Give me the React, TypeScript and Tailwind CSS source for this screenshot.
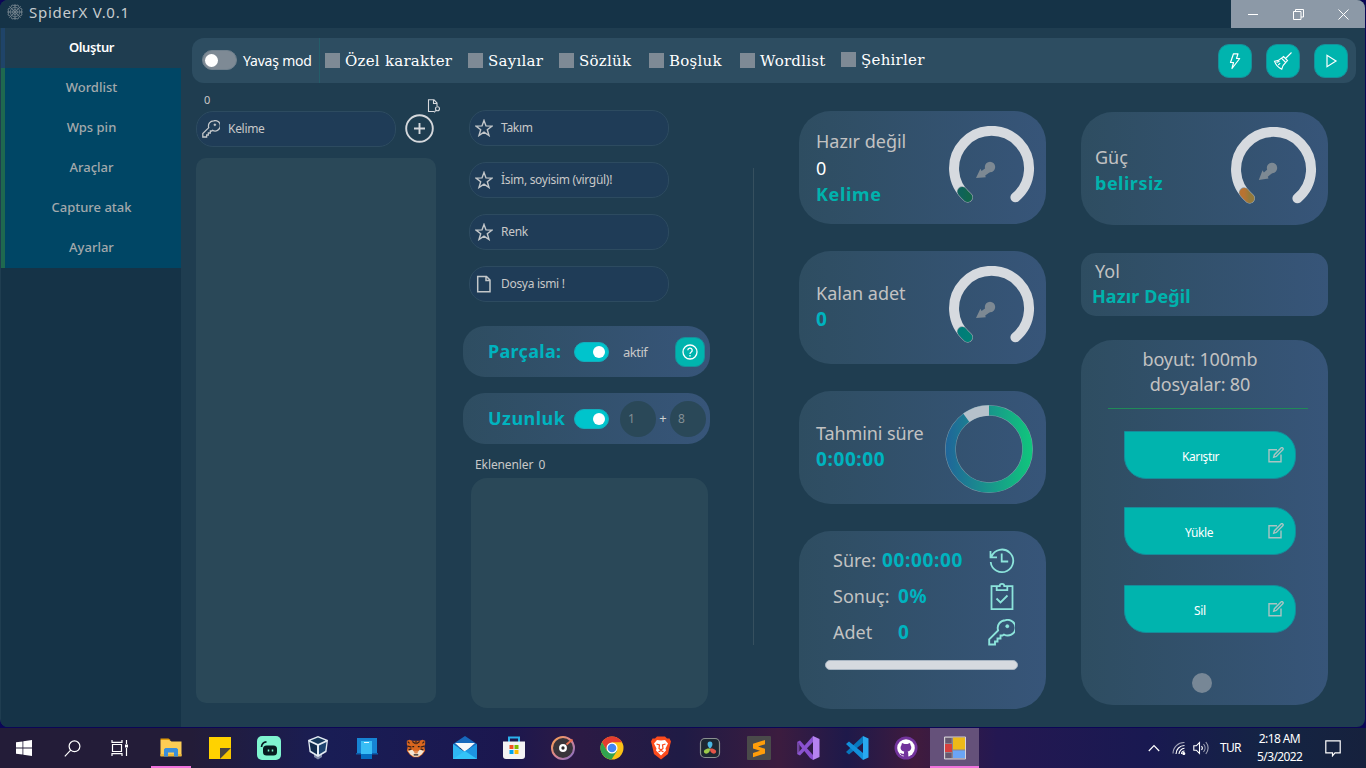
import React from "react";

type Kids = { children?: React.ReactNode };

function KeyIcon({ size, className, sw }: { size: number; className: string; sw: number }) {
  return (
    <svg width={size} height={size} viewBox="0 0 27 27" fill="none" stroke="currentColor" strokeWidth={sw} className={className}>
      <path d="M17.500 1.200a7.800 7.800 0 0 0-7.400 10.200L1.200 20.300V25.500h5.800v-3h2.500v-3h3v-3h2l1.400-1A7.800 7.800 0 1 0 17.500 1.200z" />
      <circle cx="19.300" cy="7.200" r="1.700" fill="currentColor" strokeWidth="0.4" />
    </svg>
  );
}

function StarIcon() {
  return (
    <svg width="18" height="18" viewBox="0 0 18 18" fill="none" stroke="#c3c7ca" strokeWidth="1.4" className="shrink-0">
      <path d="M9 1.400 11 6.900l6 .2-4.700 3.700 1.700 5.700L9 13.200 4 16.500l1.700-5.700L1 7.100l6-.2z" />
    </svg>
  );
}

function FileIcon() {
  return (
    <svg width="18" height="18" viewBox="0 0 18 18" fill="none" stroke="#c3c7ca" strokeWidth="1.5" className="shrink-0">
      <path d="M2.700 1.500h8.800L15 5v11.800H2.700z M11 1.500V5.400h4" />
    </svg>
  );
}

function EditIcon() {
  return (
    <svg width="16" height="16" viewBox="0 0 16 16" fill="none" stroke="#a9c4c2" strokeWidth="1.400" className="shrink-0">
      <path d="M9 2.700H1v12h12V7.500" />
      <path d="M5.700 10.300l.7-2.600L13 1a1.200 1.200 0 0 1 1.800 1.700L8.300 9.500z" />
    </svg>
  );
}

function Toggle({ on }: { on?: boolean }) {
  return on ? (
    <div className="flex h-5 w-[35px] shrink-0 items-center justify-end rounded-full border border-[#12aebc] bg-[#00c4cc] pr-[3px]">
      <div className="size-3 rounded-full bg-white" />
    </div>
  ) : (
    <div className="flex h-5 w-[35px] shrink-0 items-center rounded-full border border-[#6f808d] bg-[#7e8a95] pl-[2px]">
      <div className="size-[13px] rounded-full bg-white" />
    </div>
  );
}

function Input({ label, children }: { label: string } & Kids) {
  return (
    <div className="flex h-9 w-[200px] shrink-0 items-center rounded-[17px] border border-[#2d4b60] bg-[#1f3c57] pl-[5px]">
      {children}
      <span className="ml-2 text-[12px] tracking-[-0.3px] text-[#c8c8c8]">{label}</span>
    </div>
  );
}

function Gauge({ id, from, to, rotate }: { id: string; from: string; to: string; rotate?: string }) {
  return (
    <svg width="86" height="86" viewBox="949 126 86 86" className="mt-[15px] mr-[11px] shrink-0">
      <defs>
        <linearGradient id={id}>
          <stop offset="0" stopColor={from} />
          <stop offset="1" stopColor={to} />
        </linearGradient>
      </defs>
      <path d="M967.700 197.300A37.500 37.500 0 1 1 1015.400 197.300" fill="none" stroke="#d6dadf" strokeWidth="10" strokeLinecap="round" />
      <path d="M967.700 197.300A37.500 37.500 0 0 1 962.200 191.600" fill="none" stroke="#8b9aa5" strokeWidth="10.500" strokeLinecap="round" />
      <path d="M967.700 197.300A37.500 37.500 0 0 1 962.200 191.600" fill="none" stroke={`url(#${id})`} strokeWidth="9.400" strokeLinecap="round" />
      <g fill="#7d8993" transform={rotate}>
        <circle cx="990" cy="167" r="5.200" />
        <path d="M976 178l4.400-9.300 1.200 2.200 6-4.500 3.600 4.800-6 4.300.6 1.700z" />
      </g>
    </svg>
  );
}

function Card({ className, children }: { className: string } & Kids) {
  return <div className={"flex w-[247px] shrink-0 bg-linear-to-r from-[#2e4d61] to-[#375579] " + className}>{children}</div>;
}

function SquareButton({ children }: Kids) {
  return <div className="flex size-[34px] items-center justify-center rounded-[11px] border border-[#16909a] bg-[#00b4ae]">{children}</div>;
}

function ActionButton({ label, pad }: { label: string; pad: string }) {
  return (
    <div className="flex h-12 w-[172px] shrink-0 items-center rounded-[22px] rounded-tl-none border border-[#158c9a] bg-[#00b4ae] pt-px pr-[11px]">
      <span className={"flex-1 pt-[2px] text-[12px] tracking-[-0.4px] text-white " + pad}>{label}</span>
      <div className="-mt-[2px]"><EditIcon /></div>
    </div>
  );
}

function Logo({ children, size = 24 }: { size?: number } & Kids) {
  return <svg width={size} height={size} viewBox="0 0 24 24">{children}</svg>;
}

function TaskCell({ children, state = "" }: { state?: string } & Kids) {
  const bg = state === "active" ? " bg-[#65517a]" : "";
  return (
    <div className={"relative flex h-10 w-[49px] shrink-0 items-center justify-center" + bg}>
      {children}
      {state === "open" && <div className="absolute bottom-0 left-[5px] h-[2px] w-[40px] bg-[#f072dc]" />}
      {state === "active" && <div className="absolute bottom-0 left-0 h-[2px] w-[49px] bg-[#f072dc]" />}
    </div>
  );
}

const checks = [
  { label: "Özel karakter", w: "w-[143px]" },
  { label: "Sayılar", w: "w-[91px]" },
  { label: "Sözlük", w: "w-[90px]" },
  { label: "Boşluk", w: "w-[91px]" },
  { label: "Wordlist", w: "w-[101px]" },
  { label: "Şehirler", w: "w-[100px] -mt-[2px]" },
];

function TitleBar() {
  return (
    <div className="flex h-7 shrink-0 items-center bg-[#153347]">
      <svg width="16" height="16" viewBox="0 0 16 16" fill="none" stroke="#73828c" strokeWidth="0.9" className="mt-[-4px] ml-[7px]">
        <path d="M8 0v16M0 8h16M2.300 2.300l11.400 11.400M13.700 2.300L2.300 13.700" />
        <path d="M5 1 8 1.700l3-.7 1.300 2.700 2.700 1.300L14.300 8l.7 3-2.700 1.300-1.300 2.700L8 14.300l-3 .7-1.300-2.700-2.700-1.300L1.700 8 1 5l2.700-1.300z" />
        <path d="M8 3 11.500 4.500 13 8 11.500 11.500 8 13 4.500 11.500 3 8 4.500 4.500z" />
        <path d="M8 5.500 9.800 6.200 10.500 8 9.800 9.800 8 10.500 6.200 9.800 5.500 8 6.200 6.200z" />
      </svg>
      <span className="mt-[-4px] ml-[6px] text-[15px] tracking-[0.72px] text-[#c6cbce]">SpiderX V.0.1</span>
      <div className="ml-auto flex h-7 w-[134px] bg-[#8c99a7]">
        <div className="flex w-[44px] items-center justify-center"><div className="h-px w-[10px] bg-white" /></div>
        <div className="flex w-[45px] items-center justify-center pl-px">
          <svg width="11" height="11" viewBox="0 0 11 11" fill="none" stroke="white"><path d="M.5 2.500h7.500v8H.5z M2.500 2.500V.5h8v7.500H8" /></svg>
        </div>
        <div className="flex w-[45px] items-center justify-center pl-px">
          <svg width="11" height="11" viewBox="0 0 11 11" fill="none" stroke="white"><path d="M.5.5l10 10M10.500.5l-10 10" /></svg>
        </div>
      </div>
    </div>
  );
}

function Sidebar() {
  return (
    <div className="w-[180px] shrink-0 bg-[#153347] text-[13px] font-medium text-[#a3a9ac]">
      <div className="flex h-10 items-center justify-center border-l-4 border-[#1f4469] bg-[#1f3d50] pr-[3px] font-semibold tracking-[-0.4px] text-white">Oluştur</div>
      {["Wordlist", "Wps pin", "Araçlar", "Capture atak", "Ayarlar"].map((t) => (
        <div key={t} className="flex h-10 items-center justify-center border-l-4 border-[#1f694f] bg-[#004665] pr-[3px]">{t}</div>
      ))}
    </div>
  );
}

function Toolbar() {
  return (
    <div className="mt-[10px] ml-[11px] flex h-[45px] w-[1164px] shrink-0 items-center rounded-[12px] bg-[#2d4d61] pl-[10px]">
      <div className="-mt-px"><Toggle /></div>
      <span className="ml-[6px] w-[76px] pb-px text-[14px] tracking-[-0.2px] text-white">Yavaş mod</span>
      <div className="mr-[5px] h-[45px] w-px bg-[#245d69]" />
      {checks.map((c) => (
        <div key={c.label} className={"flex shrink-0 items-center " + c.w}>
          <div className="size-[15px] shrink-0 bg-[#7e8a95]" />
          <span className="ml-[5px] font-['DejaVu_Serif',serif] text-[15px] leading-5 tracking-[0.25px] whitespace-nowrap text-white">{c.label}</span>
        </div>
      ))}
      <div className="mr-[8px] ml-auto flex gap-[14px]">
        <SquareButton>
          <svg width="16" height="18" viewBox="0 0 16 18" fill="none" stroke="white" strokeWidth="1.200" strokeLinejoin="round"><path d="M6.500 1.800h4.500L9.500 6.500h3.200L5 16.500 6.500 10.500H3.500z" /></svg>
        </SquareButton>
        <SquareButton>
          <svg width="20" height="20" viewBox="0 0 20 20" fill="none" stroke="white" strokeWidth="1.100"><path d="M18.500 1.500l-6 6M10.500 5.500l4 4-1.800 2L8.500 7.200z M8.500 7.200C6.500 9.500 4.500 10 1.500 10.300c1.500 4 4 6.500 7.200 8 .5-3 1.800-5 4-6.800M5.200 14l2-1.800M3.500 11.500l3-1.200" /></svg>
        </SquareButton>
        <SquareButton>
          <svg width="14" height="16" viewBox="0 0 14 16" fill="none" stroke="white" strokeWidth="1.200"><path d="M3 2.300v11.400L12 8z" /></svg>
        </SquareButton>
      </div>
    </div>
  );
}

function WordColumn() {
  return (
    <div className="ml-[15px] flex w-[244px] shrink-0 flex-col">
      <div className="flex h-7 items-end pl-2">
        <span className="h-5 text-[11px] leading-[18px] text-[#c8c8c8]">0</span>
      </div>
      <div className="flex">
        <Input label="Kelime"><KeyIcon size={18} sw={1.9} className="shrink-0 text-[#c3c7ca]" /></Input>
        <div className="relative ml-[9px] h-9 w-[35px]">
          <svg width="29" height="29" viewBox="0 0 29 29" fill="none" stroke="#d5d8dc" strokeWidth="1.900" className="mt-[3px]">
            <circle cx="14.500" cy="14.500" r="13.300" /><path d="M14.500 9v11M9 14.500h11" />
          </svg>
          <svg width="14" height="14" viewBox="0 0 14 14" fill="none" stroke="#d5d8dc" strokeWidth="1.100" className="absolute -top-[12px] left-[22px]">
            <path d="M7 12.500H1.500V.8h5.500L10 4v3M6.500.8V4.500H10" /><circle cx="10.500" cy="9.700" r="2" /><path d="M8.800 11.300L7.200 13.300" />
          </svg>
        </div>
      </div>
      <div className="mt-[11px] h-[545px] w-[240px] rounded-[10px] bg-[#2a4858]" />
    </div>
  );
}

function OptionsColumn() {
  return (
    <div className="ml-[23px] flex w-[247px] shrink-0 flex-col pt-[27px]">
      <div className="flex flex-col gap-4 pl-[6px]">
        <Input label="Takım"><StarIcon /></Input>
        <Input label="İsim, soyisim (virgül)!"><StarIcon /></Input>
        <Input label="Renk"><StarIcon /></Input>
        <Input label="Dosya ismi !"><FileIcon /></Input>
      </div>
      <Card className="mt-6 h-[51px] items-center rounded-[22px] pl-[25px]">
        <span className="w-[86px] pb-[2px] text-[18px] leading-[26px] font-bold tracking-[0.3px] text-[#00b3bf]">Parçala:</span>
        <Toggle on />
        <span className="ml-[14px] w-[52px] pt-[2px] text-[13px] tracking-[-0.5px] text-[#c8c8c8]">aktif</span>
        <div className="flex size-[30px] items-center justify-center rounded-[10px] border border-[#16909a] bg-[#00b4ae]">
          <svg width="16" height="16" viewBox="0 0 16 16" fill="none" stroke="white" strokeWidth="1.300">
            <circle cx="8" cy="8" r="7" /><path d="M5.800 6.300a2.200 2.200 0 1 1 3.300 1.900C8.300 8.700 8 9 8 10" /><path d="M8 11v1.400" />
          </svg>
        </div>
      </Card>
      <Card className="mt-4 h-[51px] items-center rounded-[22px] pl-[25px]">
        <span className="w-[86px] pb-[2px] text-[18px] leading-[26px] font-bold tracking-[0.45px] text-[#00b3bf]">Uzunluk</span>
        <Toggle on />
        <div className="ml-[11px] flex size-9 items-center rounded-full bg-[#2a4858] pl-2 text-[12px] text-[#828e94]">1</div>
        <span className="w-[14px] text-center text-[13px] text-[#d0d0d0]">+</span>
        <div className="flex size-9 items-center rounded-full bg-[#2a4858] pl-2 text-[12px] text-[#828e94]">8</div>
      </Card>
      <div className="mt-[11px] flex h-[23px] gap-[5px] pl-3 text-[12px] leading-5 text-[#c8c8c8]"><span className="tracking-[-0.1px]">Eklenenler</span><span>0</span></div>
      <div className="ml-2 h-[230px] w-[237px] rounded-[16px] bg-[#2a4858]" />
    </div>
  );
}

function StatRow({ label, value, pad, children }: { label: string; value: string; pad: string } & Kids) {
  return (
    <div className="flex h-9 items-center">
      <span className={"shrink-0 " + pad}>{label}</span>
      <span className="text-[19px] font-bold tracking-[0.65px] text-[#00b3bf]">{value}</span>
      <div className="mr-[31px] ml-auto flex">{children}</div>
    </div>
  );
}

function StatsColumn() {
  return (
    <div className="ml-[45px] flex w-[247px] shrink-0 flex-col gap-[27px] pt-7 text-[18px] leading-[26px] text-[#c2c2c2]">
      <Card className="h-[113px] justify-between rounded-[32px] pl-[17px]">
        <div className="pt-[17px]">
          <div>Hazır değil</div><div className="pt-px text-white">0</div><div className="font-bold tracking-[0.65px] text-[#00b3ad]">Kelime</div>
        </div>
        <Gauge id="g1" from="#0f6359" to="#11664c" />
      </Card>
      <Card className="h-[113px] justify-between rounded-[32px] pl-[17px]">
        <div className="pt-[29px]"><div>Kalan adet</div><div className="text-[19px] font-bold text-[#00b3bf]">0</div></div>
        <Gauge id="g2" from="#007d79" to="#008076" />
      </Card>
      <Card className="h-[113px] justify-between rounded-[32px] pl-[17px]">
        <div className="pt-[29px]"><div className="tracking-[-0.1px]">Tahmini süre</div><div className="text-[19px] font-bold tracking-[0.6px] text-[#00b3bf]">0:00:00</div></div>
        <svg width="90" height="90" viewBox="-45 -45 90 90" className="mt-[13px] mr-[12px] shrink-0">
          <defs><linearGradient id="ring" gradientUnits="userSpaceOnUse" x1="-44" x2="44" y1="0" y2="0"><stop stopColor="#20649a" /><stop offset="1" stopColor="#10c77c" /></linearGradient></defs>
          <circle r="38.600" fill="none" stroke="#7c9aa8" strokeWidth="10.800" />
          <circle r="38.600" fill="none" stroke="url(#ring)" strokeWidth="9.800" />
          <path d="M0-38.600A38.600 38.600 0 0 0-22.700-31.200" fill="none" stroke="#b6c1cb" strokeWidth="10.500" />
        </svg>
      </Card>
      <Card className="h-[178px] flex-col rounded-[32px] pt-[11px] pl-[34px]">
        <StatRow label="Süre:" value="00:00:00" pad="w-[49px]">
          <svg width="26" height="26" viewBox="0 0 26 26" fill="none" stroke="#8ce4db" strokeWidth="1.800" className="mt-[2px]"><path d="M2.500 8.500A11.300 11.300 0 1 1 1.700 14M1.500 3v6.300h6.500M12.700 5.500v8h6.500" /></svg>
        </StatRow>
        <StatRow label="Sonuç:" value="0%" pad="w-[65px]">
          <svg width="26" height="28" viewBox="0 0 26 28" fill="none" stroke="#8ce4db" strokeWidth="1.800" className="mt-[2px]"><path d="M8 3.200H2.500v23h21v-23H18M7.700 3.200v4h10.600v-4h-3a2.300 2.300 0 0 0-4.600 0z M7.500 15.500l4 4L18.500 12.500" /></svg>
        </StatRow>
        <StatRow label="Adet" value="0" pad="w-[65px]"><KeyIcon size={27} sw={1.9} className="mt-px text-[#8ce4db]" /></StatRow>
        <div className="mt-[10px] -ml-2 h-[10px] w-[193px] rounded-full border border-[#a9b6c3] bg-[#d6dadf]" />
      </Card>
    </div>
  );
}

function PathColumn() {
  return (
    <div className="ml-[35px] flex w-[248px] shrink-0 flex-col pt-[29px] text-[18px] leading-[26px] text-[#c2c2c2]">
      <Card className="h-[113px] justify-between rounded-[32px] pl-[14px]">
        <div className="pt-8"><div>Güç</div><div className="font-bold tracking-[0.5px] text-[#00b3ad]">belirsiz</div></div>
        <Gauge id="g3" from="#b87332" to="#947a3b" rotate="rotate(-4 990 167)" />
      </Card>
      <Card className="mt-7 h-[63px] flex-col rounded-[15px] pt-[5px] pl-[11px]">
        <div className="pl-[3px]">Yol</div><div className="leading-[25px] font-bold tracking-[0.1px] text-[#00b3ad]">Hazır Değil</div>
      </Card>
      <Card className="mt-6 h-[365px] flex-col items-center rounded-[32px] pt-[7px]">
        <div className="mr-[9px] text-center leading-[25px] tracking-[-0.15px]"><div>boyut: 100mb</div><div>dosyalar: 80</div></div>
        <div className="mt-[11px] ml-[6px] h-px w-[200px] bg-[#208a58]" />
        <div className="mt-[22px] ml-[11px] flex flex-col gap-[28px]">
          <ActionButton label="Karıştır" pad="pl-[57px]" />
          <ActionButton label="Yükle" pad="pl-[60px]" />
          <div className="mt-[2px]"><ActionButton label="Sil" pad="pl-[69px]" /></div>
        </div>
        <div className="mt-[40px] mr-[6px] size-5 rounded-full bg-[#778796]" />
      </Card>
    </div>
  );
}

function Taskbar() {
  return (
    <div className="mt-px flex h-10 items-center bg-[linear-gradient(90deg,#231c38_0%,#231c38_14%,#191d55_24%,#1b174f_37%,#2c1a44_42%,#1f1b45_50%,#3c1c3f_57%,#1e194a_62%,#401b3d_67%,#241852_73%,#191951_84%,#142443_93%,#16213d_100%)] text-white">
      <div className="flex w-[48px] justify-center">
        <svg width="16" height="16" viewBox="0 0 16 16" fill="white"><path d="M0 2.300l6.500-.9v6.200H0z M7.300 1.300L16 0v7.600H7.300z M0 8.400h6.500v6.200L0 13.700z M7.300 8.400H16V16l-8.700-1.300z" /></svg>
      </div>
      <TaskCell><svg width="17" height="17" viewBox="0 0 17 17" fill="none" stroke="white" strokeWidth="1.200" className="mr-px"><circle cx="10.500" cy="6.300" r="5.400" /><path d="M6.700 10.200L.8 16.300" /></svg></TaskCell>
      <TaskCell><svg width="18" height="16" viewBox="0 0 18 16" fill="none" stroke="white" strokeWidth="1.200" className="mr-[3px]"><path d="M1.500 4.500h9v7h-9z M1 0v2.300h10V0M1 16v-2.300h10V16M15.500 0v4M15.500 8v8" /><path d="M14 4.500h3v3h-3z" fill="white" stroke="none" /></svg></TaskCell>
      <TaskCell state="open"><Logo><path d="M1.500 4V2.500h8L11.500 4z" fill="#e09b0a" /><path d="M1.500 4h9l2 1.500h10V20h-21z" fill="#fdcd55" /><path d="M1.500 18h21v2.500h-21z" fill="#edb83a" /><path d="M5 20.500v-7.300l1.500-1.200h11l1.500 1.200v7.300h-4v-4H9v4z" fill="#3a8edb" /></Logo></TaskCell>
      <TaskCell><Logo><path d="M1 1h22v11l-11 11H1z" fill="#ffd200" /><path d="M12 23V12h11z" fill="#4a4440" /><path d="M12 23L23 12v11z" fill="#f5c400" /></Logo></TaskCell>
      <TaskCell><Logo><rect width="24" height="24" rx="5" fill="#7ff5d0" /><rect x="6" y="9.500" width="14" height="10" rx="3.500" fill="#071b20" /><path d="M4.500 11c.3-3.500 2-5 5-5.200" stroke="#071b20" strokeWidth="1.700" fill="none" /><path d="M11.500 13.500v2M15.500 13.500v2" stroke="#7ff5d0" strokeWidth="1.500" /></Logo></TaskCell>
      <TaskCell><Logo><path d="M8 18l4-1 4 1v3l-4 2.500L8 21z" fill="#7f8aa8" /><path d="M12 0l10 4-1.500 12L12 21 3.500 16 2 4z" fill="#e3ebf3" /><path d="M12 1.500L19.500 4.500 12 8 4.500 4.500z" fill="#14375b" /><path d="M3.500 6l7.500 3.500v9L4.800 14.800z" fill="#0e294b" /><path d="M20.500 6L13 9.500v9l6.200-3.700z" fill="#1d4470" /></Logo></TaskCell>
      <TaskCell><Logo><path d="M2 2h20v15H2z" fill="#1684d4" /><path d="M1 17h22v1.500H1z" fill="#0e5dac" /><path d="M6 5h11v18H6z" fill="#056dc1" /><path d="M6 5h11v13H6z" fill="#38bdf5" /><path d="M9 6.500h5" stroke="#e5f6ff" /></Logo></TaskCell>
      <TaskCell><Logo size={22}><path d="M2 4l3-1 3 1h8l3-1 3 1v4l-1 2 1 5-3 4-4 3h-6l-4-3-3-4 1-5-1-2z" fill="#d9661f" /><path d="M3 15l5-1 2 2h4l2-2 5 1-3 4-4 2.500h-4L6 19z" fill="#f3e6d4" /><path d="M9.500 15h5l-1 3h-3z" fill="#e38a50" /><path d="M8 5l3 2M16 5l-3 2M3 10l4 1M21 10l-4 1M4 14l3-1M20 14l-3-1M12 4v4M3 5l2 2M21 5l-2 2" stroke="#36221c" strokeWidth="1.300" /><path d="M8 10.500h2M14 10.500h2M9.500 19.500h5" stroke="#241c1a" strokeWidth="1.400" /></Logo></TaskCell>
      <TaskCell><Logo><path d="M0 8L12 0l12 8v4H0z" fill="#1769bd" /><path d="M2 7h20L12 16z" fill="#f6f8fa" /><path d="M0 8l12 8v7H0z" fill="#2fb6f2" /><path d="M24 8L12 15v8h12z" fill="#1d95e2" /><path d="M0 23l12-8 12 8z" fill="#33c4f8" /></Logo></TaskCell>
      <TaskCell><Logo><path d="M7 6V1.500h10V6" fill="none" stroke="#2bb2ee" strokeWidth="2" /><path d="M1 5.500h22V20a3 3 0 0 1-3 3H4a3 3 0 0 1-3-3z" fill="#f3f3f3" /><path d="M7.500 9h4v4h-4z" fill="#f25022" /><path d="M12.500 9h4v4h-4z" fill="#7fba00" /><path d="M7.500 14h4v4h-4z" fill="#00a4ef" /><path d="M12.500 14h4v4h-4z" fill="#ffb900" /></Logo></TaskCell>
      <TaskCell><Logo><defs><linearGradient id="cd" x1="0" y1="0" x2="1" y2="1"><stop stopColor="#f6a04f" /><stop offset=".5" stopColor="#d98692" /><stop offset="1" stopColor="#7f6cc5" /></linearGradient></defs><circle cx="12" cy="12" r="11" fill="#39353a" stroke="url(#cd)" strokeWidth="2" /><circle cx="12" cy="12" r="2.800" fill="#2b292d" stroke="white" strokeWidth="2.300" /><path d="M15.500 8.500l6-5" stroke="#e97154" strokeWidth="2" /></Logo></TaskCell>
      <TaskCell><Logo><circle cx="12" cy="12" r="11.500" fill="#fbc116" /><path d="M12 6.300h10A11.500 11.500 0 0 0 2 6.300L7 15z" fill="#e53c30" /><path d="M2 6.300A11.500 11.500 0 0 0 11.500 23.500L17 15 12 12 7 15z" fill="#31a350" /><circle cx="12" cy="12" r="5.500" fill="white" /><circle cx="12" cy="12" r="4.300" fill="#4285f4" /></Logo></TaskCell>
      <TaskCell><Logo><path d="M8 .5h8l2 2h2.500l1.500 3-.7 2.500L19 18l-7 5.500L5 18 2.700 8 2 5.500l1.500-3H6z" fill="#fb4b1d" /><path d="M12 4.500l4-.5 3 3.500-2.500 5 .5 2-5 5-5-5 .5-2L5 7.500 8 4z" fill="white" /><path d="M7.500 8l3 1-.5 3.500 2 1.500 2-1.500L13.500 9l3-1M9.500 16l2.500-1.500 2.500 1.500" fill="none" stroke="#fb4b1d" strokeWidth="1.200" /></Logo></TaskCell>
      <TaskCell><Logo><rect x="2.500" y="2.500" width="19" height="19" rx="4.500" fill="#1d2833" stroke="#8b9190" strokeWidth="1.200" /><path d="M12 12.500c-3-2-3.500-7 0-7s3 5 0 7z" fill="#4bb8e4" /><path d="M12 12.500c.5 4-3.500 6.500-5.500 4.500s1-5 5.500-4.500z" fill="#9ccb4a" /><path d="M12 12.500c-.5 4 3.500 6.500 5.500 4.500s-1-5-5.500-4.500z" fill="#e45549" /></Logo></TaskCell>
      <TaskCell><Logo><rect width="24" height="24" rx="1" fill="#4a4a4a" /><path d="M18 4v4.300l-7 2.200 7 2.200v4.800L6 21.300V17l7-2.200-7-2.200V7.800z" fill="#ff9d0a" /></Logo></TaskCell>
      <TaskCell><Logo><path d="M1 6l3-1.500L17 19v5L14 22z" fill="#8a4fd0" /><path d="M1 18V6l2.500 1.500v9z" fill="#71469f" /><path d="M17 0l6.500 3v18L17 24z" fill="#b582f0" /><path d="M1 18l3 1.500L17 6V0z" fill="#8a54cf" /></Logo></TaskCell>
      <TaskCell><Logo><path d="M1 16l3 2.500L18 7V0z" fill="#0877bd" /><path d="M1 8l3-2.500L18 17v7z" fill="#1290db" /><path d="M18 0l5.500 2.500v19L18 24z" fill="#29a8f0" /></Logo></TaskCell>
      <TaskCell><Logo><circle cx="12" cy="12" r="11.500" fill="#72339c" /><circle cx="12" cy="12" r="8.800" fill="white" /><path d="M8 7l2.500 1h3L16 7l.6 2.300c1.700 2.700.2 5.700-3 6.200.6.800.7 1.500.7 2.500V22h-4.600v-2.500c-2 .3-2.700-.7-3.200-1.700l-.8-.8c1.700-.5 2 1.200 4 .9l.5-2.400c-3.300-.5-4.600-3.500-2.800-6.200z" fill="#72339c" /></Logo></TaskCell>
      <TaskCell state="active"><Logo><path d="M1.500 1h21v22h-21z" fill="#8a8490" stroke="#d7d1d8" /><path d="M10 1.500h12v12H10z" fill="#edb919" /><path d="M2 8h7v8H2z" fill="#d7403e" /><path d="M10 14.500h12V22H10z" fill="#6ba5f5" /><path d="M2.500 2h6v5h-6zM2.500 17h6v5h-6z" fill="#66596f" /></Logo></TaskCell>
      <div className="ml-auto flex items-center pr-[25px] text-[12px]">
        <svg width="12" height="8" viewBox="0 0 12 8" fill="none" stroke="white" strokeWidth="1.200"><path d="M.8 7L6 1.500 11.200 7" /></svg>
        <svg width="14" height="14" viewBox="0 0 14 14" fill="none" stroke="white" strokeWidth="1.100" className="ml-[12px]"><path d="M1 12.500A11 11 0 0 1 12.500 1.500" opacity=".6" /><path d="M4 13a8.500 8.500 0 0 1 8.500-8.500M7 13a5.800 5.800 0 0 1 5.500-5.700M9.500 13a3 3 0 0 1 3-3" /><circle cx="11.800" cy="12.500" r="1" fill="white" /></svg>
        <svg width="17" height="14" viewBox="0 0 17 14" fill="none" stroke="white" strokeWidth="1.100" className="ml-[7px]"><path d="M.8 4.800h2.500L6.500 1.500v11L3.300 9.200H.8z M8.500 5a3 3 0 0 1 0 4" /><path d="M10.500 3a6 6 0 0 1 0 8M12.800 1a9 9 0 0 1 0 12" opacity=".6" /></svg>
        <span className="ml-[10px] w-[37px] tracking-[-0.7px]">TUR</span>
        <div className="w-[45px] text-center leading-[18px] tracking-[-0.6px] whitespace-nowrap"><div>2:18 AM</div><div>5/3/2022</div></div>
        <svg width="16" height="17" viewBox="0 0 16 17" fill="none" stroke="white" strokeWidth="1.200" className="ml-[23px]"><path d="M.8.800h14.400v12H10l-2.500 3v-3H.8z" /></svg>
      </div>
    </div>
  );
}

export default function App() {
  return (
    <div className="h-[768px] w-[1366px] overflow-hidden bg-[#0b0656] font-['Noto_Sans',sans-serif]">
      <div className="flex h-[727px] w-[1365px] flex-col overflow-hidden rounded-[8px] bg-[#1f3d50]">
        <TitleBar />
        <div className="flex flex-1 pl-px">
          <Sidebar />
          <div className="flex flex-1 flex-col">
            <Toolbar />
            <div className="flex">
              <WordColumn />
              <OptionsColumn />
              <div className="mt-[85px] ml-[43px] h-[477px] w-px bg-[#36505f]" />
              <StatsColumn />
              <PathColumn />
            </div>
          </div>
        </div>
      </div>
      <Taskbar />
    </div>
  );
}
